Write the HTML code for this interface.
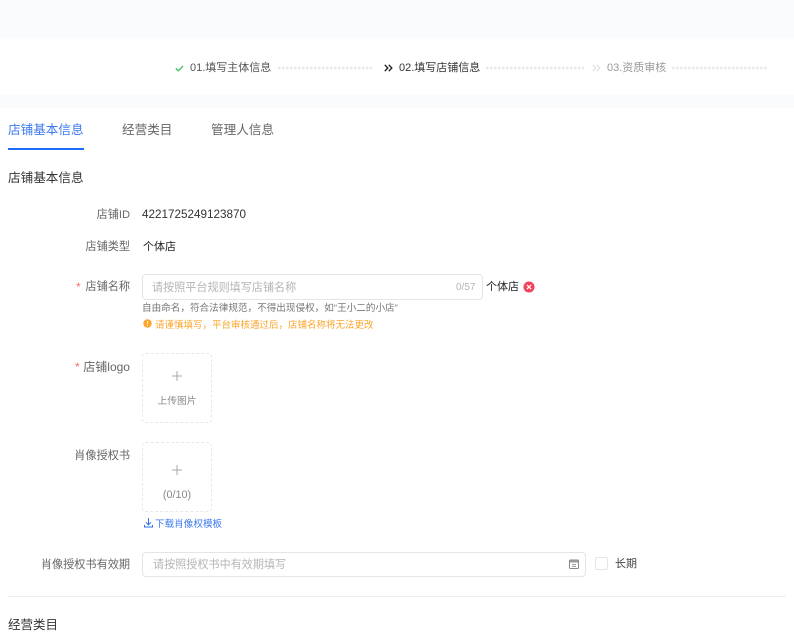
<!DOCTYPE html>
<html lang="zh">
<head>
<meta charset="utf-8">
<style>
html,body{margin:0;padding:0;background:#fff}
body{width:794px;height:640px;overflow:hidden;position:relative;font-family:"Liberation Sans","Noto Sans CJK SC",sans-serif;color:#333}
.a{position:absolute;white-space:nowrap}
.band{position:absolute;left:0;width:794px;background:#fafbfd}
.dots{position:absolute;top:66px;height:4px;background-image:radial-gradient(circle at 1.2px 2px,#e8eaed 1.3px,transparent 1.5px);background-size:4px 4px}
.s{font-size:11px;line-height:16px;top:60px}
.lab{font-size:11.15px;line-height:16px;color:#666;text-align:right;right:664px}
.val{font-size:11.7px;line-height:16px;color:#333}
.box{position:absolute;box-sizing:border-box;border:1px solid #e5e5e5;border-radius:4px;background:#fff}
.up{position:absolute;box-sizing:border-box;left:142px;width:70px;height:70px;border:1px dashed #e8e8e8;border-radius:4px}
.tab{font-size:12.6px;line-height:18px;top:121px}
</style>
</head>
<body>
<div class="band" style="top:0;height:38px"></div>
<div class="band" style="top:95px;height:13px"></div>

<svg class="a" style="left:175px;top:65px" width="9" height="7" viewBox="0 0 9 7"><path d="M.8 3.4 3.3 5.800 8 1" fill="none" stroke="#3cc26a" stroke-width="1.3"/></svg>
<div class="a s" style="left:190px;color:#555">01.填写主体信息</div>
<div class="dots" style="left:278px;width:96px"></div>
<svg class="a" style="left:384px;top:64px" width="9" height="8" viewBox="0 0 9 8"><path d="M.8.800 3.800 4 .8 7.200M4.800.800 7.800 4 4.800 7.200" fill="none" stroke="#222" stroke-width="1.400"/></svg>
<div class="a s" style="left:399px;color:#333">02.填写店铺信息</div>
<div class="dots" style="left:486px;width:98px"></div>
<svg class="a" style="left:592px;top:64px" width="9" height="8" viewBox="0 0 9 8"><path d="M.8.800 3.800 4 .8 7.200M4.800.800 7.800 4 4.800 7.200" fill="none" stroke="#dcdcdc" stroke-width="1"/></svg>
<div class="a s" style="left:607px;color:#999">03.资质审核</div>
<div class="dots" style="left:672px;width:96px"></div>

<div class="a tab" style="left:8px;color:#3c78f0">店铺基本信息</div>
<div class="a" style="left:8px;top:148px;width:76px;height:2px;background:#1e6bff"></div>
<div class="a tab" style="left:122px;color:#666">经营类目</div>
<div class="a tab" style="left:211px;color:#666">管理人信息</div>

<div class="a" style="left:8px;top:169px;font-size:12.6px;line-height:18px;color:#333">店铺基本信息</div>

<div class="a lab" style="top:207px">店铺ID</div>
<div class="a val" style="left:142px;top:207px">4221725249123870</div>
<div class="a lab" style="top:239px">店铺类型</div>
<div class="a val" style="left:143px;top:239px;color:#222;font-size:11px">个体店</div>

<div class="a" style="left:76px;top:279px;font-size:12px;line-height:16px;color:#f56c6c">*</div>
<div class="a lab" style="top:279px">店铺名称</div>
<div class="box" style="left:142px;top:274px;width:341px;height:26px"></div>
<div class="a" style="left:152px;top:280px;font-size:11.1px;line-height:16px;color:#b5b5b5">请按照平台规则填写店铺名称</div>
<div class="a" style="left:456px;top:281px;font-size:10px;line-height:14px;color:#b5b5b5">0/57</div>
<div class="a val" style="left:486px;top:279px;color:#222;font-size:11px">个体店</div>
<svg class="a" style="left:523px;top:281px" width="12" height="12" viewBox="0 0 12 12"><circle cx="6" cy="6" r="5.500" fill="#f2405a"/><path d="M3.800 3.800 8.200 8.200M8.200 3.800 3.800 8.200" stroke="#fff" stroke-width="1.200"/></svg>
<div class="a" style="left:142px;top:302px;font-size:9.6px;line-height:14px;color:#777">自由命名，符合法律规范，不得出现侵权，如“王小二的小店”</div>
<svg class="a" style="left:142.500px;top:319px" width="9" height="9" viewBox="0 0 9 9"><circle cx="4.500" cy="4.500" r="4.200" fill="#fba52c"/><path d="M4.500 2v3M4.500 6v1" stroke="#fff" stroke-width=".8"/></svg>
<div class="a" style="left:155px;top:319px;font-size:9.5px;line-height:14px;color:#fba52c">请谨慎填写，平台审核通过后，店铺名称将无法更改</div>

<div class="a" style="left:75px;top:359px;font-size:12px;line-height:16px;color:#f56c6c">*</div>
<div class="a lab" style="top:359px;font-size:12px">店铺logo</div>
<div class="up" style="top:353px"></div>
<svg class="a" style="left:172px;top:371px" width="10" height="10" viewBox="0 0 10 10"><path d="M5 0v10M0 5h10" stroke="#a8a8a8" stroke-width="1"/></svg>
<div class="a" style="left:142px;width:70px;text-align:center;top:395px;font-size:9.750px;line-height:14px;color:#888">上传图片</div>

<div class="a lab" style="top:448px">肖像授权书</div>
<div class="up" style="top:442px"></div>
<svg class="a" style="left:172px;top:465px" width="10" height="10" viewBox="0 0 10 10"><path d="M5 0v10M0 5h10" stroke="#a8a8a8" stroke-width="1"/></svg>
<div class="a" style="left:142px;width:70px;text-align:center;top:488px;font-size:10.800px;line-height:14px;color:#888">(0/10)</div>
<svg class="a" style="left:144px;top:518px" width="9" height="10" viewBox="0 0 9 10"><path d="M4.500 0v6.500M2 4.300 4.500 6.800 7 4.300M.5 7v2h8V7" fill="none" stroke="#2a6fec" stroke-width="1"/></svg>
<div class="a" style="left:155px;top:518px;font-size:9.600px;line-height:14px;color:#3c78f0">下载肖像权模板</div>

<div class="a lab" style="top:557px">肖像授权书有效期</div>
<div class="box" style="left:142px;top:552px;width:444px;height:25px"></div>
<div class="a" style="left:153px;top:557px;font-size:11.100px;line-height:16px;color:#b5b5b5">请按照授权书中有效期填写</div>
<svg class="a" style="left:569px;top:559px" width="10" height="10" viewBox="0 0 10 10"><rect x=".5" y="1" width="9" height="8.500" rx="1" fill="none" stroke="#888"/><rect x="1" y="1" width="8" height="2.500" fill="#999"/><path d="M3 5.700h4M3 7.500h4" stroke="#888" stroke-width=".8"/></svg>
<div class="box" style="left:595px;top:557px;width:13px;height:13px;border-radius:2px"></div>
<div class="a" style="left:615px;top:556px;font-size:11px;line-height:16px;color:#444">长期</div>

<div class="a" style="left:8px;top:596px;width:778px;height:1px;background:#eee"></div>
<div class="a" style="left:8px;top:616px;font-size:12.500px;line-height:18px;color:#333">经营类目</div>
</body>
</html>
